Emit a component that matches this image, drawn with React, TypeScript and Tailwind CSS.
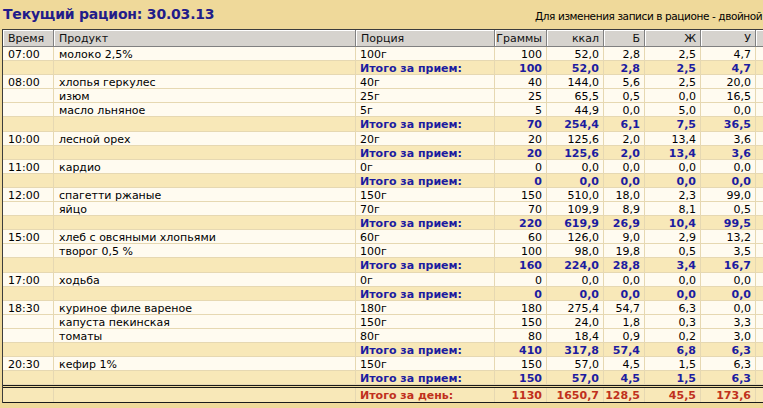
import React from "react";

type Row = {
  kind: "item" | "total";
  t?: string;
  p?: string;
  por?: string;
  v: [string, string, string, string, string];
};

const R = (t: string, p: string, por: string, ...v: string[]): Row => ({
  kind: "item",
  t,
  p,
  por,
  v: v as Row["v"],
});
const T = (...v: string[]): Row => ({ kind: "total", v: v as Row["v"] });

const rows: Row[] = [
  R("07:00", "молоко 2,5%", "100г", "100", "52,0", "2,8", "2,5", "4,7"),
  T("100", "52,0", "2,8", "2,5", "4,7"),
  R("08:00", "хлопья геркулес", "40г", "40", "144,0", "5,6", "2,5", "20,0"),
  R("", "изюм", "25г", "25", "65,5", "0,5", "0,0", "16,5"),
  R("", "масло льняное", "5г", "5", "44,9", "0,0", "5,0", "0,0"),
  T("70", "254,4", "6,1", "7,5", "36,5"),
  R("10:00", "лесной орех", "20г", "20", "125,6", "2,0", "13,4", "3,6"),
  T("20", "125,6", "2,0", "13,4", "3,6"),
  R("11:00", "кардио", "0г", "0", "0,0", "0,0", "0,0", "0,0"),
  T("0", "0,0", "0,0", "0,0", "0,0"),
  R("12:00", "спагетти ржаные", "150г", "150", "510,0", "18,0", "2,3", "99,0"),
  R("", "яйцо", "70г", "70", "109,9", "8,9", "8,1", "0,5"),
  T("220", "619,9", "26,9", "10,4", "99,5"),
  R("15:00", "хлеб с овсяными хлопьями", "60г", "60", "126,0", "9,0", "2,9", "13,2"),
  R("", "творог 0,5 %", "100г", "100", "98,0", "19,8", "0,5", "3,5"),
  T("160", "224,0", "28,8", "3,4", "16,7"),
  R("17:00", "ходьба", "0г", "0", "0,0", "0,0", "0,0", "0,0"),
  T("0", "0,0", "0,0", "0,0", "0,0"),
  R("18:30", "куриное филе вареное", "180г", "180", "275,4", "54,7", "6,3", "0,0"),
  R("", "капуста пекинская", "150г", "150", "24,0", "1,8", "0,3", "3,3"),
  R("", "томаты", "80г", "80", "18,4", "0,9", "0,2", "3,0"),
  T("410", "317,8", "57,4", "6,8", "6,3"),
  R("20:30", "кефир 1%", "150г", "150", "57,0", "4,5", "1,5", "6,3"),
  T("150", "57,0", "4,5", "1,5", "6,3"),
];

const numW = ["w-[52px]", "w-[57px]", "w-[41px]", "w-[56px]", "w-[55px]"];

const font = { fontFamily: '"DejaVu Sans", Verdana, sans-serif' };

function HeaderCell({ w, children, right }: { w: string; children?: React.ReactNode; right?: boolean }) {
  return (
    <div
      className={`${w} shrink-0 h-full bg-[#d6d3ce] border-r border-b border-r-[#808080] border-b-[#808080] shadow-[inset_1px_1px_0_#ffffff] flex items-center px-[5px] ${right ? "justify-end pr-[4px]" : ""}`}
    >
      {children}
    </div>
  );
}

export default function App() {
  return (
    <div
      className="w-[763px] h-[408px] bg-[#efd99a] overflow-hidden text-black"
      style={font}
    >
      <div className="h-[29px] flex items-end pb-[7px] relative">
        <div className="ml-[3px] text-[14px] font-bold text-[#221c8a] leading-[15px] tracking-[-0.2px]">
          Текущий рацион: 30.03.13
        </div>
        <div className="absolute left-[535px] top-[10px] whitespace-nowrap text-[10.5px] leading-[13px] tracking-[-0.4px]">
          Для изменения записи в рационе - двойной клик
        </div>
      </div>
      <div className="ml-[2px] w-[800px] border-l border-t border-[#3c3c3c]">
        <div className="flex h-[17px] text-[11px] leading-[13px] text-[#111]">
          <HeaderCell w="w-[51px]">Время</HeaderCell>
          <HeaderCell w="w-[302px]">Продукт</HeaderCell>
          <HeaderCell w="w-[139px]">Порция</HeaderCell>
          <HeaderCell w="w-[52px]" right>Граммы</HeaderCell>
          <HeaderCell w="w-[57px]" right>ккал</HeaderCell>
          <HeaderCell w="w-[41px]" right>Б</HeaderCell>
          <HeaderCell w="w-[56px]" right>Ж</HeaderCell>
          <HeaderCell w="w-[55px]" right>У</HeaderCell>
          <HeaderCell w="w-[46px]"></HeaderCell>
        </div>
        {rows.map((r, i) => {
          const tot = r.kind === "total";
          return (
            <div
              key={i}
              className={`flex h-[14.1px] pt-[1px] text-[11px] leading-[13px] border-b border-[#e6d8b2] ${tot ? "bg-[#f8e8b8]" : "bg-[#fffbf0]"}`}
            >
              <div className="w-[51px] shrink-0 border-r border-[#e6d8b2] pl-[5px] whitespace-nowrap -mt-[1px] pt-[1px]">{r.t}</div>
              <div className="w-[302px] shrink-0 border-r border-[#e6d8b2] pl-[5px] whitespace-nowrap -mt-[1px] pt-[1px]">{r.p}</div>
              <div
                className={`w-[139px] shrink-0 border-r border-[#e6d8b2] pl-[4px] whitespace-nowrap -mt-[1px] pt-[1px] ${tot ? "font-bold text-[#1c1ca0]" : ""}`}
              >
                {tot ? "Итого за прием:" : r.por}
              </div>
              {r.v.map((v, j) => (
                <div
                  key={j}
                  className={`${numW[j]} shrink-0 border-r border-[#e6d8b2] pr-[4px] text-right whitespace-nowrap -mt-[1px] pt-[1px] ${tot ? "font-bold text-[#1c1ca0]" : ""}`}
                >
                  {v}
                </div>
              ))}
              <div className="w-[46px] shrink-0" />
            </div>
          );
        })}
        <div className="h-[3px] border-t border-b border-[#1a1a1a] bg-[#efd99a]" />
        <div className="flex h-[15px] items-center text-[11px] leading-[13px] bg-[#f8e8b8] border-b border-[#1a1a1a] font-bold text-[#c0301c]">
          <div className="w-[51px] shrink-0 h-full border-r border-[#e6d8b2]" />
          <div className="w-[302px] shrink-0 h-full border-r border-[#e6d8b2]" />
          <div className="w-[139px] shrink-0 h-full border-r border-[#e6d8b2] pl-[4px] flex items-center">
            Итого за день:
          </div>
          {["1130", "1650,7", "128,5", "45,5", "173,6"].map((v, j) => (
            <div
              key={j}
              className={`${numW[j]} shrink-0 h-full border-r border-[#e6d8b2] pr-[4px] flex items-center justify-end whitespace-nowrap`}
            >
              {v}
            </div>
          ))}
        </div>
      </div>
    </div>
  );
}
